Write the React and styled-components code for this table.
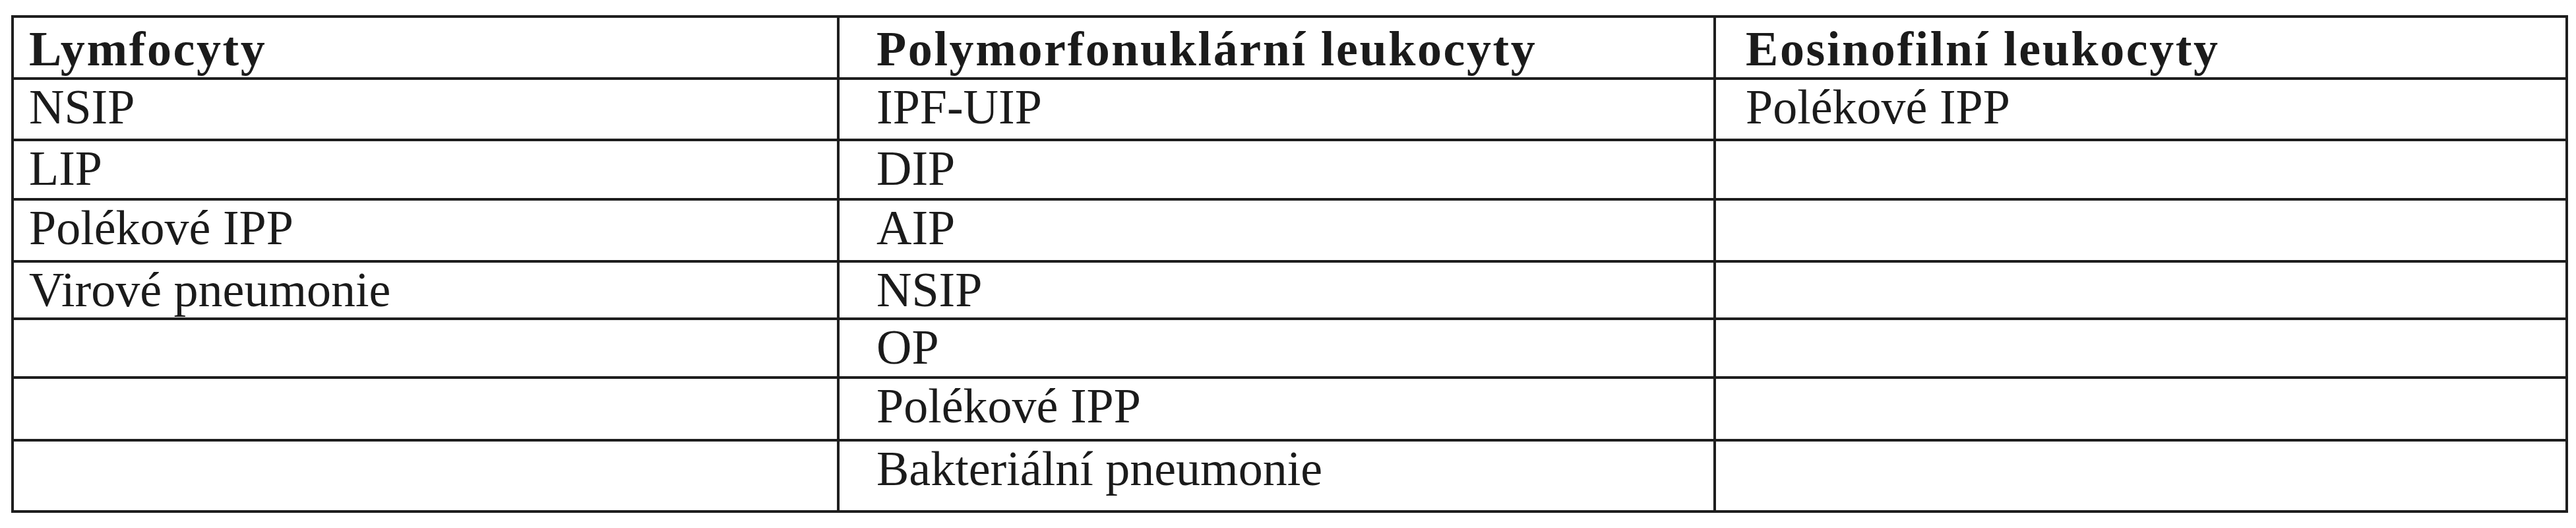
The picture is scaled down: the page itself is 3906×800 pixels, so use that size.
import React from "react";
import styled, { createGlobalStyle } from "styled-components";

const GlobalStyle = createGlobalStyle`
  html, body {
    margin: 0;
    padding: 0;
    background: #fff;
  }
  * {
    box-sizing: border-box;
  }
`;

const header = ["Lymfocyty", "Polymorfonukl\u00e1rn\u00ed leukocyty", "Eosinofiln\u00ed leukocyty"];

const rows = [
  ["NSIP", "IPF-UIP", "Pol\u00e9kov\u00e9 IPP"],
  ["LIP", "DIP", ""],
  ["Pol\u00e9kov\u00e9 IPP", "AIP", ""],
  ["Virov\u00e9 pneumonie", "NSIP", ""],
  ["", "OP", ""],
  ["", "Pol\u00e9kov\u00e9 IPP", ""],
  ["", "Bakteri\u00e1ln\u00ed pneumonie", ""],
];

// odsazeni textu v jednotlivych sloupcich
const padLeft = [23, 56, 45];

const App = () => {
  return (
    <Page>
      <GlobalStyle />
      <Table>
        {header.map((text, i) => (
          <HeadCell key={"h" + i} $pad={padLeft[i]}>
            {text}
          </HeadCell>
        ))}
        {rows.map((row, r) =>
          row.map((text, i) => (
            <Cell key={r + "-" + i} $pad={padLeft[i]}>
              {text}
            </Cell>
          ))
        )}
      </Table>
    </Page>
  );
};

export default App;

const Page = styled.div`
  width: 3906px;
  height: 800px;
  padding: 23px 0 0 17px;
  background: #fff;
`;

const Table = styled.div`
  display: grid;
  grid-template-columns: 1252px 1329px 1292px;
  grid-template-rows: 94px 93px 90px 94px 87px 89px 95px 108px;
  width: max-content;
  border-top: 4px solid #1e1e1e;
  border-left: 4px solid #1e1e1e;
`;

const Cell = styled.div`
  border-right: 4px solid #1e1e1e;
  border-bottom: 4px solid #1e1e1e;
  padding: 4px 0 0 ${(p) => p.$pad}px;
  font-family: "Liberation Serif", "Times New Roman", serif;
  font-size: 74px;
  line-height: 74px;
  color: #1b1b1b;
  white-space: nowrap;
  overflow: hidden;
`;

const HeadCell = styled(Cell)`
  padding-top: 10px;
  font-weight: 700;
  letter-spacing: 2.6px;
`;
